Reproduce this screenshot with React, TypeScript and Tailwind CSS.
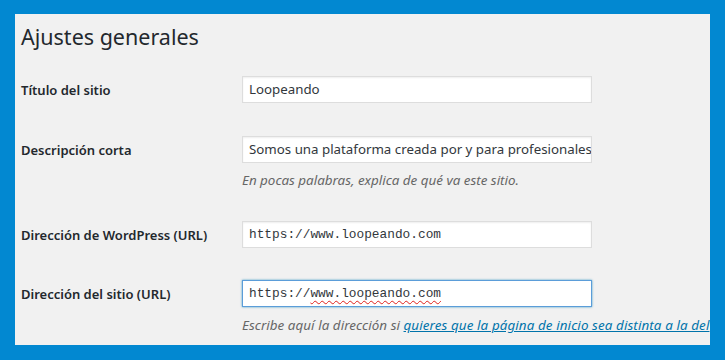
import React from 'react';

const sans = "font-['Segoe_UI','Noto_Sans',sans-serif]";

const Field: React.FC<{ value: React.ReactNode; mono?: boolean; focused?: boolean }> = ({ value, mono, focused }) => (
  <div
    className={`flex h-[27px] w-[350px] items-center overflow-hidden whitespace-nowrap bg-white px-[6px] text-[#32373c] ${
      mono ? "font-['Liberation_Mono',monospace] text-[12.8px]" : `${sans} text-[13.3px]`
    } ${
      focused
        ? 'border border-[#5b9dd9] shadow-[0_0_2px_rgba(30,140,190,0.8)]'
        : 'border border-[#dddddd] shadow-[inset_0_1px_2px_rgba(0,0,0,0.07)]'
    }`}
  >
    {value}
  </div>
);

const Row: React.FC<{ label: string; className?: string; children: React.ReactNode }> = ({ label, className, children }) => (
  <div className={`flex items-start ${className ?? ''}`}>
    <div className="flex h-[27px] w-[221px] shrink-0 items-center pt-[3px] text-[13px] font-semibold text-[#23282d]">
      {label}
    </div>
    <div className="flex flex-col">{children}</div>
  </div>
);

const App: React.FC = () => {
  return (
    <div className={`h-[360px] w-[725px] bg-[#0288d1] px-[15px] pt-[14px] ${sans}`}>
      <div className="h-[331px] w-[695px] overflow-hidden bg-[#f1f1f1] pl-[6px]">
        <h1 className="mt-[8px] h-[30px] text-[21.5px] font-normal leading-[30px] text-[#23282d]">Ajustes generales</h1>

        <Row label="Título del sitio" className="mt-[24px]">
          <Field value="Loopeando" />
        </Row>

        <Row label="Descripción corta" className="mt-[33px]">
          <Field value="Somos una plataforma creada por y para profesionales" />
          <p className="mt-[8px] text-[13.4px] italic leading-[18px] text-[#666666]">
            En pocas palabras, explica de qué va este sitio.
          </p>
        </Row>

        <Row label="Dirección de WordPress (URL)" className="mt-[32px]">
          <Field mono value="https://www.loopeando.com" />
        </Row>

        <Row label="Dirección del sitio (URL)" className="mt-[32px]">
          <Field
            mono
            focused
            value={
              <>
                https://
                <span className="underline decoration-[#e0201b] decoration-wavy decoration-1 underline-offset-[3px]">
                  www.loopeando.com
                </span>
              </>
            }
          />
          <p className="mt-[9px] whitespace-nowrap text-[13.4px] italic leading-[18px] text-[#666666]">
            <span className="tracking-[0.05px]">Escribe aquí la dirección si </span>
            <a href="#" className="tracking-[0.1px] text-[#0073aa] underline">
              quieres que la página de inicio sea distinta a la del
            </a>
          </p>
        </Row>
      </div>
    </div>
  );
};

export default App;
